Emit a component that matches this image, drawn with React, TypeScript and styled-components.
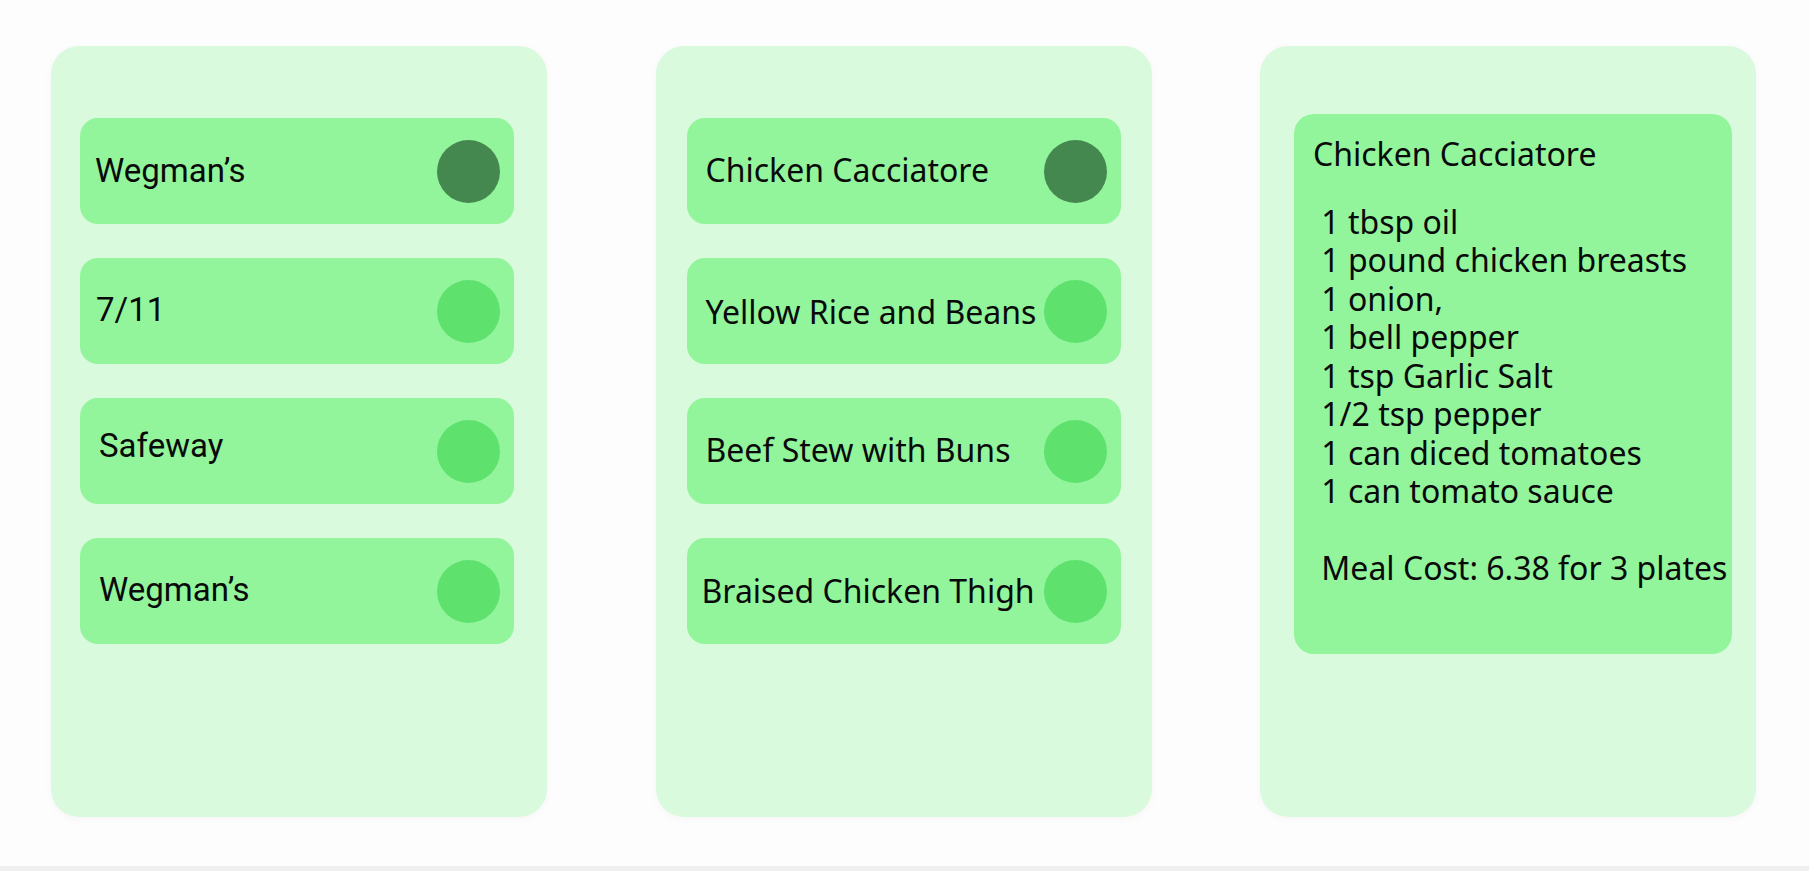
import React from "react";
import styled, { createGlobalStyle } from "styled-components";

const GlobalStyle = createGlobalStyle`
  html, body {
    margin: 0;
    padding: 0;
    background: #fdfdfd;
  }
  #root {
    min-height: 100vh;
  }
`;

const Page = styled.div`
  min-height: 100vh;
  display: flex;
  flex-direction: column;
  box-sizing: border-box;
`;

const Columns = styled.main`
  flex: 1;
  display: flex;
  justify-content: space-between;
  align-items: flex-start;
  padding: 46px 53px 0 51px;
`;

const Panel = styled.section<{ $top?: number; $left: number }>`
  width: 496px;
  height: 771px;
  box-sizing: border-box;
  background: #dafade;
  border-radius: 28px;
  box-shadow: 0 2px 8px rgba(0, 0, 0, 0.035);
  display: flex;
  flex-direction: column;
  align-items: flex-start;
  gap: 34px;
  padding-top: ${(p) => p.$top ?? 72}px;
  padding-left: ${(p) => p.$left}px;
`;

const Row = styled.div<{ $pad: number }>`
  width: 434px;
  height: 106px;
  box-sizing: border-box;
  background: #92f59b;
  border-radius: 18px;
  display: flex;
  align-items: center;
  padding: 0 14px 0 ${(p) => p.$pad}px;
  color: #0a0a0a;
`;

const Label = styled.span<{ $shift?: number; $font: string; $size: number }>`
  flex: 0 1 auto;
  min-width: 0;
  white-space: nowrap;
  overflow: visible;
  position: relative;
  top: ${(p) => p.$shift ?? 0}px;
  font-family: ${(p) => p.$font};
  font-size: ${(p) => p.$size}px;
`;

const Dot = styled.span<{ $active?: boolean }>`
  flex: 0 0 auto;
  margin-left: auto;
  width: 63px;
  height: 63px;
  border-radius: 50%;
  background: ${(p) => (p.$active ? "#45884f" : "#5ee16d")};
  position: relative;
  z-index: 1;
`;

const Recipe = styled.article`
  width: 438px;
  height: 540px;
  box-sizing: border-box;
  background: #92f59b;
  border-radius: 20px;
  padding: 21px 0 0 19px;
  font-family: "Noto Sans", sans-serif;
  font-size: 32px;
  line-height: 38.5px;
  color: #0a0a0a;
`;

const RecipeTitle = styled.h2`
  margin: 0 0 29px 0;
  font: inherit;
`;

const RecipeBody = styled.p`
  margin: 0;
  white-space: pre;
`;

const BottomBar = styled.div`
  height: 5px;
  background: #efefef;
`;

const ROBOTO = `Roboto, "Liberation Sans", sans-serif`;
const NOTO = `"Noto Sans", sans-serif`;

type Item = {
  name: string;
  active?: boolean;
  pad: number;
  shift: number;
  font: string;
  size: number;
};

const stores: Item[] = [
  { name: "Wegman\u2019s", active: true, pad: 15, shift: -1, font: ROBOTO, size: 33 },
  { name: "7/11", pad: 16, shift: -2, font: ROBOTO, size: 33 },
  { name: "Safeway", pad: 19, shift: -6, font: ROBOTO, size: 33 },
  { name: "Wegman\u2019s", pad: 19, shift: -2, font: ROBOTO, size: 33 },
];

const meals: Item[] = [
  { name: "Chicken Cacciatore", active: true, pad: 19, shift: -2, font: NOTO, size: 32 },
  { name: "Yellow Rice and Beans", pad: 19, shift: 0, font: NOTO, size: 32 },
  { name: "Beef Stew with Buns", pad: 19, shift: -2, font: NOTO, size: 32 },
  { name: "Braised Chicken Thigh", pad: 15, shift: -1, font: NOTO, size: 32 },
];

const recipeText = [
  " 1 tbsp oil",
  " 1 pound chicken breasts",
  " 1 onion,",
  " 1 bell pepper",
  " 1 tsp Garlic Salt",
  " 1/2 tsp pepper",
  " 1 can diced tomatoes",
  " 1 can tomato sauce",
  "",
  " Meal Cost: 6.38 for 3 plates",
].join("\n");

function ItemRow({ item }: { item: Item }) {
  return (
    <Row $pad={item.pad}>
      <Label $shift={item.shift} $font={item.font} $size={item.size}>
        {item.name}
      </Label>
      <Dot $active={item.active} />
    </Row>
  );
}

export default function App() {
  return (
    <Page>
      <GlobalStyle />
      <Columns>
        <Panel $left={29}>
          {stores.map((s, i) => (
            <ItemRow key={i} item={s} />
          ))}
        </Panel>
        <Panel $left={31}>
          {meals.map((m, i) => (
            <ItemRow key={i} item={m} />
          ))}
        </Panel>
        <Panel $top={68} $left={34}>
          <Recipe>
            <RecipeTitle>Chicken Cacciatore</RecipeTitle>
            <RecipeBody>{recipeText}</RecipeBody>
          </Recipe>
        </Panel>
      </Columns>
      <BottomBar />
    </Page>
  );
}
